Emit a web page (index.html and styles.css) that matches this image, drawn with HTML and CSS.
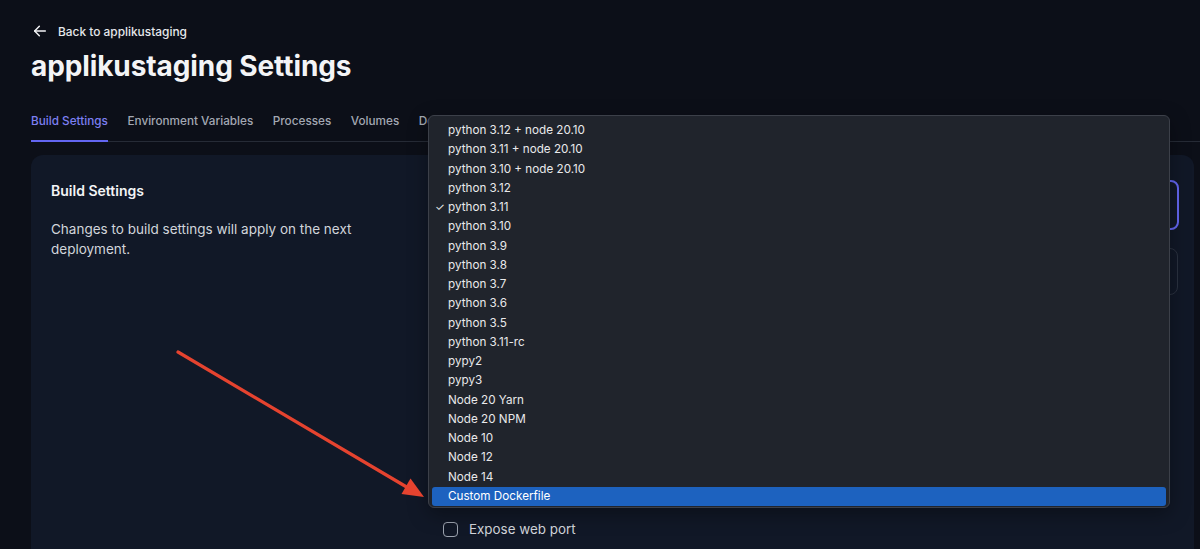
FILE: index.html
```html
<!DOCTYPE html>
<html lang="en">
<head>
<meta charset="utf-8">
<title>applikustaging Settings</title>
<link rel="stylesheet" href="styles.css">
</head>
<body>
<div class="page">
  <a class="back" href="#">
    <svg class="back-icon" width="16" height="16" viewBox="0 0 24 24" fill="none" stroke="currentColor" stroke-width="2.2" stroke-linecap="round" stroke-linejoin="round"><path d="M20 12H4"/><path d="M11 5l-7 7 7 7"/></svg>
    <span>Back to applikustaging</span>
  </a>
  <h1 class="title">applikustaging Settings</h1>
  <nav class="tabs">
    <a class="tab active" href="#">Build Settings</a>
    <a class="tab" href="#">Environment Variables</a>
    <a class="tab" href="#">Processes</a>
    <a class="tab" href="#">Volumes</a>
    <a class="tab" href="#">Domains</a>
  </nav>
  <section class="card">
    <div class="card-left">
      <h2 class="card-title">Build Settings</h2>
      <p class="card-desc">Changes to build settings will apply on the next deployment.</p>
    </div>
    <div class="card-right">
      <div class="select-box"></div>
      <div class="input-box"></div>
      <label class="check-row">
        <span class="checkbox"></span>
        <span class="check-label">Expose web port</span>
      </label>
    </div>
  </section>
</div>

<ul class="menu">
  <li class="item">python 3.12 + node 20.10</li>
  <li class="item">python 3.11 + node 20.10</li>
  <li class="item">python 3.10 + node 20.10</li>
  <li class="item">python 3.12</li>
  <li class="item checked"><span class="tick">✓</span>python 3.11</li>
  <li class="item">python 3.10</li>
  <li class="item">python 3.9</li>
  <li class="item">python 3.8</li>
  <li class="item">python 3.7</li>
  <li class="item">python 3.6</li>
  <li class="item">python 3.5</li>
  <li class="item">python 3.11-rc</li>
  <li class="item">pypy2</li>
  <li class="item">pypy3</li>
  <li class="item">Node 20 Yarn</li>
  <li class="item">Node 20 NPM</li>
  <li class="item">Node 10</li>
  <li class="item">Node 12</li>
  <li class="item">Node 14</li>
  <li class="item highlighted">Custom Dockerfile</li>
</ul>

<svg class="arrow" width="1200" height="549" viewBox="0 0 1200 549">
  <line x1="178" y1="352" x2="410" y2="489" stroke="#e5432f" stroke-width="3.2" stroke-linecap="round"/>
  <polygon points="424,497 401.5,494 410.5,478.5" fill="#e5432f"/>
</svg>
</body>
</html>
```

FILE: styles.css
```css
* { box-sizing: border-box; }

html, body {
  margin: 0;
  padding: 0;
  background: #0c0f18;
  height: 549px;
  overflow: hidden;
}

body {
  font-family: Inter, "Liberation Sans", sans-serif;
  color: #e5e7eb;
  position: relative;
}

.page {
  padding: 22px 0 0 31px;
}

.back {
  display: flex;
  align-items: center;
  gap: 10px;
  height: 18px;
  color: #e5e7eb;
  text-decoration: none;
  font-size: 11.9px;
  font-weight: 500;
}

.back-icon {
  margin-left: 1px;
  color: #f3f4f6;
}

.title {
  margin: 8px 0 0;
  font-size: 28px;
  line-height: 36px;
  font-weight: 700;
  color: #f3f4f6;
  letter-spacing: -0.1px;
}

.tabs {
  margin-top: 27px;
  display: flex;
  gap: 19.5px;
  border-bottom: 1px solid #262b36;
}

.tab {
  display: block;
  font-size: 11.75px;
  font-weight: 500;
  line-height: 20px;
  padding-bottom: 9px;
  margin-bottom: -1px;
  border-bottom: 2px solid transparent;
  color: #a3a8b3;
  text-decoration: none;
}

.tab.active {
  color: #7c7ff2;
  border-bottom-color: #6366f1;
}

.card {
  margin: 13px 6px 0 0;
  background: #111827;
  border-radius: 12px;
  height: 420px;
  padding: 25px 15px 0 20px;
  display: grid;
  grid-template-columns: 392px 1fr;
}

.card-title {
  margin: 1px 0 0;
  font-size: 14px;
  line-height: 20px;
  font-weight: 600;
  color: #f3f4f6;
}

.card-desc {
  margin: 18px 0 0;
  font-size: 13.5px;
  line-height: 20px;
  color: #d1d5db;
  max-width: 320px;
}

.card-right {
  display: flex;
  flex-direction: column;
}

.select-box {
  height: 50px;
  border: 2px solid #6366f1;
  border-radius: 8px;
  background: #111827;
}

.input-box {
  margin-top: 18px;
  height: 47px;
  border: 1px solid #2b3240;
  border-radius: 8px;
  margin-right: 1px;
}

.check-row {
  margin-top: 224px;
  display: flex;
  align-items: center;
  gap: 11px;
  height: 20px;
}

.checkbox {
  width: 15px;
  height: 15px;
  border: 1.5px solid #9ca3af;
  border-radius: 4px;
}

.check-label {
  font-size: 13.4px;
  color: #d1d5db;
}

.menu {
  position: absolute;
  left: 428px;
  top: 115px;
  width: 742px;
  height: 393px;
  margin: 0;
  padding: 5px 3px 2px;
  list-style: none;
  background: #20242c;
  border: 1px solid #3c4049;
  border-radius: 6px;
  box-shadow: 0 6px 20px rgba(0, 0, 0, 0.35);
}

.item {
  position: relative;
  height: 19.25px;
  line-height: 19.25px;
  padding-left: 16px;
  font-size: 11.7px;
  color: #e9e9eb;
  border-radius: 3px;
  white-space: nowrap;
}

.tick {
  position: absolute;
  left: 3px;
  top: 0;
  font-size: 11px;
  color: #e9e9eb;
}

.item.highlighted {
  background: #1d62bf;
  color: #ffffff;
}

.arrow {
  position: absolute;
  left: 0;
  top: 0;
  pointer-events: none;
}
```
